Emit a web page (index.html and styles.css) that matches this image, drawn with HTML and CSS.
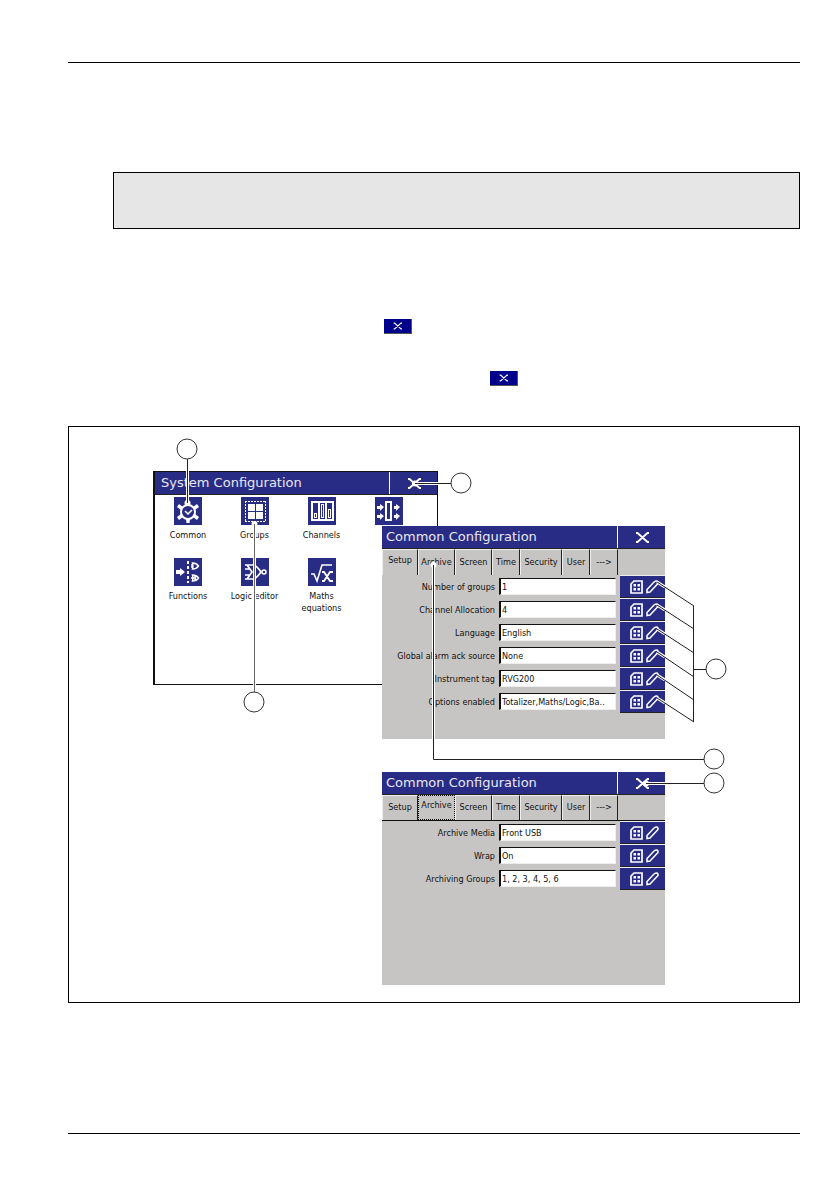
FILE: index.html
```html
<!DOCTYPE html>
<html lang="en">
<head>
  <meta charset="utf-8">
  <title>System Configuration</title>
  <link rel="stylesheet" href="styles.css">
</head>
<body>
  <!-- shared icons -->
  <svg class="defs" aria-hidden="true">
    <symbol id="close" viewBox="0 0 14 11">
      <path d="M1 1h1.500l10 9H14M1 10h1.500l10-9H14" fill="none" stroke="#fff" stroke-width="1.8"/>
    </symbol>
    <symbol id="edit" viewBox="0 0 30 14">
      <path d="M1 4L4 1h8v12H1z" fill="none" stroke="#fff" stroke-width="1.7"/>
      <path d="M3.500 4h2.500v2.500H3.500zM7.500 4H10v2.500H7.500zM3.500 8H6v2.500H3.500zM7.500 8H10v2.500H7.500z" fill="#fff"/>
      <path d="M17 12.500v-3l7-7.500q3-2 4 0v1.500l-8 8.500z" fill="none" stroke="#fff" stroke-width="1.500"/>
    </symbol>
  </svg>

  <div class="page">
    <header class="rule"></header>

    <div class="note"></div>

    <div class="steps">
      <p class="step"><button class="exit" aria-label="Exit"><svg width="9" height="8"><use href="#close"/></svg></button></p>
      <p class="step step-save"><button class="exit" aria-label="Save and exit"><svg width="9" height="8"><use href="#close"/></svg></button></p>
    </div>

    <div class="figure">
      <section class="window system">
        <div class="titlebar">
          <h2>System Configuration</h2>
          <button class="close" aria-label="Close"><svg width="14" height="11"><use href="#close"/></svg></button>
        </div>
        <div class="menu">
          <a href="#common" class="item">
            <svg viewBox="0 0 28 28" class="icon">
              <circle cx="14" cy="15" r="7" fill="none" stroke="#fff" stroke-width="2"/>
              <path d="M12 8L12.500 4h3L16 8zM12 22l.5 4h3l.5-4zM7 13L3 10l2-3 4 3zM21 13l4-3-2-3-4 3zM7 17l-4 3 2 3 4-3zM21 17l4 3-2 3-4-3z" fill="#fff"/>
              <path d="M11 14l3 3 4-4" fill="none" stroke="#fff" stroke-width="1.500"/>
            </svg>
            <span>Common</span>
          </a>
          <a href="#groups" class="item">
            <svg viewBox="0 0 28 28" class="icon">
              <path d="M4 4.500h21M4 24.500h21M4.500 4v21M24.500 4v21" fill="none" stroke="#fff" stroke-dasharray="2 1"/>
              <path d="M7 7h7v7H7zM15 7h7v7h-7zM7 15h7v7H7zM15 15h7v7h-7z" fill="#fff"/>
            </svg>
            <span>Groups</span>
          </a>
          <a href="#channels" class="item">
            <svg viewBox="0 0 28 28" class="icon">
              <path d="M3 4h23v20H3z" fill="#fff"/>
              <path d="M5 6h5v16H5zM12 6h5v16h-5zM19 6h5v16h-5z" fill="#292c84"/>
              <path d="M6 16h3v5H6zM13 7h3v14h-3zM20 12h3v9h-3z" fill="#fff"/>
              <path d="M7 17h1v3H7zM14 8h1v12h-1zM21 13h1v7h-1z" fill="#292c84"/>
            </svg>
            <span>Channels</span>
          </a>
          <a href="#io" class="item" aria-label="I/O modules">
            <svg viewBox="0 0 28 28" class="icon">
              <path d="M11 5h5v18h-5z" fill="none" stroke="#fff" stroke-width="2"/>
              <path d="M2 9h3V7l4 3-4 4v-2H2zM2 18h3v-2l4 3-4 4v-2H2zM19 9h2V7l4 3-4 4v-2h-2zM19 18h2v-2l4 3-4 4v-2h-2z" fill="#fff"/>
            </svg>
          </a>
          <a href="#functions" class="item">
            <svg viewBox="0 0 28 28" class="icon">
              <path d="M2 12h4v-2l5 4-5 4v-2H2z" fill="#fff"/>
              <path d="M14 3v22" stroke="#fff" stroke-width="2" stroke-dasharray="3 2"/>
              <path d="M18.500 5q1 3 0 6 4 0 6-3-2-3-6-3zM18.500 17q1 3 0 6 4 0 6-3-2-3-6-3zM17 7h2M17 9h2M17 20h5M21 18v4" fill="none" stroke="#fff" stroke-width="1.400"/>
            </svg>
            <span>Functions</span>
          </a>
          <a href="#logic" class="item">
            <svg viewBox="0 0 28 28" class="icon">
              <path d="M4 7h8q3 0 8 7-5 7-8 7H4M6 7l5 7-5 7M4 11h4M4 17h4" fill="none" stroke="#fff" stroke-width="1.700"/>
              <circle cx="23" cy="14" r="2" fill="none" stroke="#fff" stroke-width="1.500"/>
            </svg>
            <span>Logic editor</span>
          </a>
          <a href="#maths" class="item">
            <svg viewBox="0 0 28 28" class="icon">
              <path d="M3 16h3l3 7 5-16h10" fill="none" stroke="#fff" stroke-width="1.600"/>
              <path d="M14 14h2l6 9h3M14 23h2l6-9h3" fill="none" stroke="#fff" stroke-width="1.800"/>
            </svg>
            <span>Maths equations</span>
          </a>
        </div>
      </section>

      <section class="window common">
        <div class="titlebar">
          <h2>Common Configuration</h2>
          <button class="close" aria-label="Close"><svg width="14" height="11"><use href="#close"/></svg></button>
        </div>
        <div class="tabs">
          <button class="tab first active">Setup</button>
          <button class="tab wide">Archive</button>
          <button class="tab wide">Screen</button>
          <button class="tab">Time</button>
          <button class="tab widest">Security</button>
          <button class="tab">User</button>
          <button class="tab">---&gt;</button>
        </div>
        <form class="fields">
          <div class="field">
            <label for="groups">Number of groups</label>
            <input id="groups" type="text" value="1">
            <button type="button" class="edit" aria-label="Edit"><svg width="30" height="14"><use href="#edit"/></svg></button>
          </div>
          <div class="field">
            <label for="channel">Channel Allocation</label>
            <input id="channel" type="text" value="4">
            <button type="button" class="edit" aria-label="Edit"><svg width="30" height="14"><use href="#edit"/></svg></button>
          </div>
          <div class="field">
            <label for="language">Language</label>
            <input id="language" type="text" value="English">
            <button type="button" class="edit" aria-label="Edit"><svg width="30" height="14"><use href="#edit"/></svg></button>
          </div>
          <div class="field">
            <label for="alarm">Global alarm ack source</label>
            <input id="alarm" type="text" value="None">
            <button type="button" class="edit" aria-label="Edit"><svg width="30" height="14"><use href="#edit"/></svg></button>
          </div>
          <div class="field">
            <label for="tag">Instrument tag</label>
            <input id="tag" type="text" value="RVG200">
            <button type="button" class="edit" aria-label="Edit"><svg width="30" height="14"><use href="#edit"/></svg></button>
          </div>
          <div class="field">
            <label for="options">Options enabled</label>
            <input id="options" type="text" value="Totalizer,Maths/Logic,Ba..">
            <button type="button" class="edit" aria-label="Edit"><svg width="30" height="14"><use href="#edit"/></svg></button>
          </div>
        </form>
      </section>

      <section class="window archive">
        <div class="titlebar">
          <h2>Common Configuration</h2>
          <button class="close" aria-label="Close"><svg width="14" height="11"><use href="#close"/></svg></button>
        </div>
        <div class="tabs lined">
          <button class="tab first">Setup</button>
          <button class="tab wide active focus">Archive</button>
          <button class="tab wide">Screen</button>
          <button class="tab">Time</button>
          <button class="tab widest">Security</button>
          <button class="tab">User</button>
          <button class="tab">---&gt;</button>
        </div>
        <form class="fields">
          <div class="field">
            <label for="media">Archive Media</label>
            <input id="media" type="text" value="Front USB">
            <button type="button" class="edit" aria-label="Edit"><svg width="30" height="14"><use href="#edit"/></svg></button>
          </div>
          <div class="field">
            <label for="wrap">Wrap</label>
            <input id="wrap" type="text" value="On">
            <button type="button" class="edit" aria-label="Edit"><svg width="30" height="14"><use href="#edit"/></svg></button>
          </div>
          <div class="field">
            <label for="archiving">Archiving Groups</label>
            <input id="archiving" type="text" value="1, 2, 3, 4, 5, 6">
            <button type="button" class="edit" aria-label="Edit"><svg width="30" height="14"><use href="#edit"/></svg></button>
          </div>
        </form>
      </section>

      <!-- leader lines and callout circles -->
      <svg class="callouts" width="730" height="575" aria-hidden="true">
        <g class="halo">
          <path d="M118.500 44v32M369 56.500h-23M185.500 258V97M364.500 312V138M596 356.500h-19"/>
          <path d="M588 155l8 5M588 178l8 5M588 202l8 5M588 225l8 5M588 248l8 5M588 271l8 5"/>
        </g>
        <g class="dots">
          <circle cx="118.500" cy="76" r="3"/>
          <circle cx="346" cy="56.500" r="3"/>
          <circle cx="185.500" cy="97" r="3"/>
          <circle cx="364.500" cy="138" r="3"/>
          <circle cx="577" cy="356.500" r="3"/>
        </g>
        <g class="lines">
          <path d="M118.500 32v44M382 56.500h-36M364.500 138v194.500H635M577 356.500h58"/>
          <path d="M588 155l37 24M588 178l37 24M588 202l37 24M588 225l37 25M588 248l37 25M588 271l37 24"/>
          <path d="M624.500 179v116M624.500 242.500h13"/>
          <path d="M185.500 97v168" class="soft"/>
        </g>
        <g class="rings">
          <circle cx="118" cy="22" r="10"/>
          <circle cx="392" cy="56" r="10"/>
          <circle cx="185" cy="275" r="10"/>
          <circle cx="647" cy="242" r="10"/>
          <circle cx="645" cy="332" r="10"/>
          <circle cx="645" cy="356" r="10"/>
        </g>
      </svg>
    </div>

    <footer class="rule"></footer>
  </div>
</body>
</html>
```
FILE: styles.css
```css
* {
  box-sizing: border-box;
}
body {
  margin: 0;
  background: #fff;
  color: #111;
  font-family: "DejaVu Sans Condensed", "DejaVu Sans", sans-serif;
  font-size: 9px;
}
button {
  font: inherit;
  margin: 0;
  padding: 0;
  border: none;
  color: inherit;
}
svg {
  display: block;
}
.defs {
  display: none;
}

.page {
  padding: 62px 39px 57px 68px;
}
.rule {
  border-top: 1px solid #000;
}
.note {
  height: 57px;
  margin: 109px 0 0 45px;
  border: 1px solid #000;
  background: #e6e6e6;
}

.steps {
  display: flex;
  flex-direction: column;
  gap: 37px;
  padding: 90px 0 40px 316px;
}
.step {
  margin: 0;
}
.step-save {
  padding-left: 106px;
}
.exit {
  display: flex;
  align-items: center;
  justify-content: center;
  width: 28px;
  height: 15px;
  background: #00008b;
  border-right: 1px solid #555;
  border-bottom: 1px solid #555;
}

.figure {
  position: relative;
  height: 577px;
  margin-bottom: 130px;
  border: 1px solid #000;
}

/* windows placed on the figure canvas */
.window {
  position: absolute;
  width: 283px;
  height: 213px;
  background: #c6c5c3;
}
.system {
  left: 84px;
  top: 44px;
  width: 285px;
  height: 214px;
  background: #fff;
  border: 1px solid #111;
  border-left-width: 2px;
}
.common {
  left: 313px;
  top: 99px;
}
.archive {
  left: 313px;
  top: 345px;
}

.titlebar {
  display: flex;
  height: 23px;
  background: #292c84;
  border-bottom: 1px solid #222;
}
.titlebar h2 {
  flex: 1;
  margin: 0;
  padding-left: 4px;
  font-family: "DejaVu Sans", sans-serif;
  font-size: 13px;
  font-weight: 400;
  line-height: 22px;
  color: #e8e8f4;
}
.system .titlebar h2 {
  padding-left: 6px;
}
.close {
  display: flex;
  align-items: center;
  justify-content: center;
  width: 48px;
  background: #292c84;
  border-left: 1px solid #fff;
}

.menu {
  display: grid;
  grid-template-columns: 66px 67px 67px 67px;
  grid-auto-rows: 61px;
  padding-top: 2px;
}
.item {
  display: flex;
  flex-direction: column;
  align-items: center;
  gap: 4px;
  line-height: 12px;
  text-align: center;
  color: #111;
  text-decoration: none;
}
.item span {
  max-width: 56px;
}
.icon {
  width: 28px;
  height: 28px;
  background: #292c84;
}

.tabs {
  display: flex;
  height: 26px;
  padding-right: 5px;
}
.tab {
  width: 28px;
  padding-bottom: 2px;
  background: #c6c5c3;
  border-top: 1px solid #eee;
  border-left: 1px solid #eee;
  border-right: 1px solid #222;
  white-space: nowrap;
}
.first {
  width: 36px;
}
.wide {
  width: 37px;
}
.widest {
  width: 42px;
}
.active {
  padding-bottom: 6px;
}
.lined {
  border-bottom: 1px solid #111;
}
.focus {
  border: 1px dotted #111;
}

.fields {
  display: grid;
  grid-auto-rows: 23px;
}
.field {
  display: grid;
  grid-template-columns: 113px 117px 45px;
  column-gap: 4px;
  align-items: center;
}
.field label {
  text-align: right;
  white-space: nowrap;
}
.field input {
  width: 100%;
  height: 17px;
  padding: 0 1px;
  font: inherit;
  color: #111;
  background: #fff;
  border: 1px solid #eee;
  border-top-color: #111;
  border-left: 2px solid #111;
}
.edit {
  display: flex;
  align-items: center;
  justify-content: center;
  height: 23px;
  padding-left: 4px;
  background: #292c84;
  border-top: 1px solid #eee;
  border-bottom: 1px solid #222;
}

.callouts {
  position: absolute;
  left: 0;
  top: 0;
  fill: none;
  pointer-events: none;
}
.halo {
  stroke: #fff;
  stroke-width: 3;
}
.dots {
  fill: #fff;
}
.lines {
  stroke: #222;
}
.soft {
  stroke: #666;
}
.rings {
  fill: #fff;
  stroke: #333;
}
```
